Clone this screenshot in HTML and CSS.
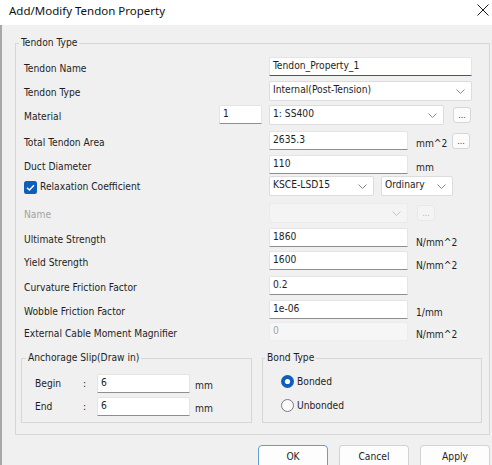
FILE: index.html
```html
<!DOCTYPE html>
<html>
<head>
<meta charset="utf-8">
<title>Add/Modify Tendon Property</title>
<link rel="stylesheet" href="styles.css">
</head>
<body>
<div class="dialog">
  <div class="titlebar">
    <span class="title">Add/Modify Tendon Property</span>
    <svg class="close" width="12" height="12" viewBox="0 0 12 12"><path d="M0.5 0.5 L11.5 11.5 M11.5 0.5 L0.5 11.5" stroke="#1b1b1b" stroke-width="1" fill="none"/></svg>
  </div>
  <div class="content">
    <fieldset class="group main">
      <legend>Tendon Type</legend>

      <div class="row h24">
        <span class="lbl">Tendon Name</span>
        <div class="field wide focus">Tendon_Property_1</div>
      </div>

      <div class="row h24">
        <span class="lbl">Tendon Type</span>
        <div class="combo wide"><span>Internal(Post-Tension)</span><svg class="chev" width="9" height="5" viewBox="0 0 9 5"><polyline points="0.5,0.5 4.5,4.5 8.5,0.5" fill="none" stroke="#8a8a8a" stroke-width="1"/></svg></div>
      </div>

      <div class="row h26">
        <span class="lbl short">Material</span>
        <div class="field num">1</div>
        <div class="combo mat"><span>1: SS400</span><svg class="chev" width="9" height="5" viewBox="0 0 9 5"><polyline points="0.5,0.5 4.5,4.5 8.5,0.5" fill="none" stroke="#8a8a8a" stroke-width="1"/></svg></div>
        <span class="dots dots-far">...</span>
      </div>

      <div class="row h24">
        <span class="lbl">Total Tendon Area</span>
        <div class="field mid">2635.3</div>
        <span class="unit">mm^2</span>
        <span class="dots">...</span>
      </div>

      <div class="row h21">
        <span class="lbl">Duct Diameter</span>
        <div class="field mid">110</div>
        <span class="unit">mm</span>
      </div>

      <div class="row h27">
        <span class="lbl check-lbl"><svg class="check" width="13" height="13" viewBox="0 0 13 13"><rect x="0" y="0" width="13" height="13" rx="2.5" fill="#0f5fb8"/><polyline points="3,6.8 5.4,9.1 10,4.2" fill="none" stroke="#fff" stroke-width="1.4"/></svg>Relaxation Coefficient</span>
        <div class="combo code"><span>KSCE-LSD15</span><svg class="chev" width="9" height="5" viewBox="0 0 9 5"><polyline points="0.5,0.5 4.5,4.5 8.5,0.5" fill="none" stroke="#8a8a8a" stroke-width="1"/></svg></div>
        <div class="combo kind"><span>Ordinary</span><svg class="chev" width="9" height="5" viewBox="0 0 9 5"><polyline points="0.5,0.5 4.5,4.5 8.5,0.5" fill="none" stroke="#8a8a8a" stroke-width="1"/></svg></div>
      </div>

      <div class="row h25">
        <span class="lbl disabled">Name</span>
        <div class="combo mid off"><span></span><svg class="chev" width="9" height="5" viewBox="0 0 9 5"><polyline points="0.5,0.5 4.5,4.5 8.5,0.5" fill="none" stroke="#c4c4c4" stroke-width="1"/></svg></div>
        <span class="dots off dots-near">...</span>
      </div>

      <div class="row h23">
        <span class="lbl">Ultimate Strength</span>
        <div class="field mid">1860</div>
        <span class="unit low">N/mm^2</span>
      </div>

      <div class="row h25">
        <span class="lbl">Yield Strength</span>
        <div class="field mid">1600</div>
        <span class="unit low">N/mm^2</span>
      </div>

      <div class="row h24">
        <span class="lbl">Curvature Friction Factor</span>
        <div class="field mid">0.2</div>
      </div>

      <div class="row h22">
        <span class="lbl">Wobble Friction Factor</span>
        <div class="field mid">1e-06</div>
        <span class="unit">1/mm</span>
      </div>

      <div class="row h29">
        <span class="lbl">External Cable Moment Magnifier</span>
        <div class="field mid off">0</div>
        <span class="unit">N/mm^2</span>
      </div>

      <div class="subgroups">
        <fieldset class="group anchor">
          <legend>Anchorage Slip(Draw in)</legend>
          <div class="srow">
            <span class="slbl">Begin</span>
            <span class="colon">:</span>
            <div class="field slip">6</div>
            <span class="sunit">mm</span>
          </div>
          <div class="srow">
            <span class="slbl">End</span>
            <span class="colon">:</span>
            <div class="field slip">6</div>
            <span class="sunit">mm</span>
          </div>
        </fieldset>
        <fieldset class="group bond">
          <legend>Bond Type</legend>
          <div class="radio-row">
            <svg class="radio" width="13" height="13" viewBox="0 0 13 13"><circle cx="6.5" cy="6.5" r="6.5" fill="#0f5fb8"/><circle cx="6.5" cy="6.5" r="2.6" fill="#fff"/></svg>
            <span>Bonded</span>
          </div>
          <div class="radio-row">
            <svg class="radio" width="13" height="13" viewBox="0 0 13 13"><circle cx="6.5" cy="6.5" r="6" fill="#fafafa" stroke="#7b7b7b" stroke-width="1"/></svg>
            <span>Unbonded</span>
          </div>
        </fieldset>
      </div>
    </fieldset>

    <div class="buttons">
      <span class="btn default">OK</span>
      <span class="btn">Cancel</span>
      <span class="btn">Apply</span>
    </div>
  </div>
</div>
</body>
</html>
```

FILE: styles.css
```css
* { box-sizing: border-box; }

html, body {
  margin: 0;
  padding: 0;
}

body {
  width: 492px;
  height: 465px;
  overflow: hidden;
  background: #f0f0f0;
  font-family: "DejaVu Sans Condensed", "Liberation Sans", sans-serif;
  font-size: 10.2px;
  color: #1e1e1e;
}

.dialog {
  width: 492px;
  height: 465px;
  display: flex;
  flex-direction: column;
}

.titlebar {
  height: 25px;
  flex: none;
  background: #ffffff;
  display: flex;
  align-items: flex-start;
  padding: 3px 3px 0 9px;
}

.title {
  font-family: "Noto Sans", "Open Sans", sans-serif;
  font-size: 11.5px;
  line-height: 16px;
  color: #111;
}

.close {
  margin-left: auto;
  margin-top: 1px;
}

.content {
  flex: 1;
  border-left: 2px solid #a8a8a8;
  padding: 11px 0 0 13px;
}

.group {
  margin: 0;
  padding: 0;
  border: 1px solid #d6d6d6;
  min-width: 0;
}

.group legend {
  padding: 0 2px;
  line-height: 14px;
}

.main {
  width: 475px;
  padding: 7px 0 11px;
}

.main legend { margin-left: 3px; }

.row {
  display: flex;
  align-items: flex-start;
  padding-left: 8px;
  height: 24px;
}

.h21 { height: 21px; }
.h22 { height: 22px; }
.h23 { height: 23px; }
.h24 { height: 24px; }
.h25 { height: 25px; }
.h26 { height: 26px; }
.h27 { height: 27px; }
.h29 { height: 29px; }

.lbl {
  width: 245px;
  flex: none;
  padding-top: 5px;
  line-height: 14px;
  white-space: nowrap;
}

.lbl.short { width: 195px; }

.lbl.disabled { color: #a3a3a3; }

.check-lbl {
  display: flex;
  align-items: center;
  padding-top: 4px;
}

.check { margin-right: 3px; flex: none; }

.field {
  height: 19px;
  background: #ffffff;
  border: 1px solid #e4e4e4;
  border-bottom-color: #8e8e8e;
  border-radius: 2px 2px 0 0;
  padding: 0 3px;
  line-height: 15px;
  white-space: nowrap;
  flex: none;
}

.field.focus { border-bottom-color: #0a64c2; }

.field.off {
  background: #f6f6f6;
  color: #a6a6a6;
  border-color: #ececec;
}

.wide { width: 203px; }
.mid { width: 139px; }
.num { width: 43px; margin-right: 7px; }
.mat { width: 175px; }
.code { width: 105px; }
.kind { width: 72px; margin-left: 7px; }

.combo {
  height: 20px;
  background: #ffffff;
  border: 1px solid #dcdcdc;
  border-radius: 2px;
  padding: 0 6px 0 3px;
  display: flex;
  align-items: center;
  justify-content: space-between;
  line-height: 14px;
  white-space: nowrap;
  flex: none;
}

.combo span { padding-bottom: 2px; }

.combo.off {
  background: #f4f4f4;
  border-color: #ebebeb;
}

.chev { flex: none; }

.unit {
  width: 36px;
  margin-left: 8px;
  padding-top: 6px;
  line-height: 14px;
  flex: none;
  white-space: nowrap;
}

.unit.low { padding-top: 8px; }

.dots {
  width: 18px;
  height: 16px;
  margin-top: 2px;
  background: #fbfbfb;
  border: 1px solid #d6d6d6;
  border-radius: 3px;
  color: #444;
  font-size: 9px;
  line-height: 14px;
  text-align: center;
  flex: none;
}

.dots-far { margin-left: 9px; }
.dots-near { margin-left: 9px; }

.dots.off {
  color: #b8b8b8;
  background: #f4f4f4;
  border-color: #e8e8e8;
}

.subgroups {
  display: flex;
  gap: 10px;
  padding-left: 5px;
}

.anchor {
  width: 231px;
  padding: 9px 0 2px;
}

.anchor legend { margin-left: 4px; }

.bond {
  width: 220px;
  padding: 4px 0 2px;
}

.bond legend { margin-left: 2px; }

.srow {
  display: flex;
  align-items: flex-start;
  height: 23px;
  padding-left: 13px;
}

.slbl {
  width: 48px;
  padding-top: 3px;
  line-height: 14px;
}

.colon {
  width: 14px;
  padding-top: 3px;
  line-height: 14px;
}

.slip { width: 93px; }

.sunit {
  margin-left: 5px;
  padding-top: 5px;
  line-height: 14px;
}

.radio-row {
  display: flex;
  align-items: center;
  height: 24px;
  padding-left: 18px;
}

.radio { margin-right: 3px; flex: none; }

.buttons {
  display: flex;
  gap: 11px;
  padding-left: 243px;
  margin-top: 10px;
}

.btn {
  width: 70px;
  height: 24px;
  background: #fdfdfd;
  border: 1px solid #d3d3d3;
  border-bottom-color: #c2c2c2;
  border-radius: 4px;
  text-align: center;
  line-height: 22px;
  flex: none;
}

.btn.default { border-color: #6a9bd0; }
```
